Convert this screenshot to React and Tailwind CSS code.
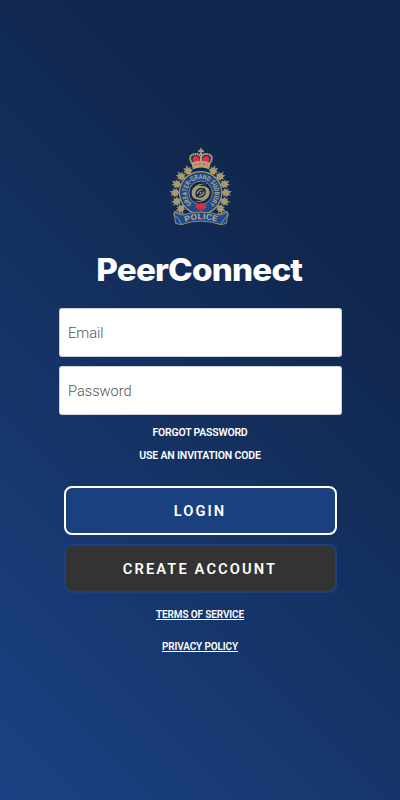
const LEAF =
  'M0 -14 L3 -8 L7 -11 L6 -4 L14 -7 L12 -1 L15 2 L7 6 L9 10 L1 8 L2 15 L-2 15 L-1 8 L-9 10 L-7 6 L-15 2 L-12 -1 L-14 -7 L-6 -4 L-7 -11 L-3 -8 Z'

// wreath leaves fan upwards and outwards from the stem
const SPRIG = 'M-2 12 L-9 5 L-14 4 L-9 -1 L-12 -8 L-6 -6 L-4 -18 L1 -9 L8 -15 L7 -5 L14 -4 L8 2 L10 7 L4 8 Z'

// angles measured from twelve o'clock, mirrored on both sides of the wreath
const WREATH = [30, 50, 70, 90, 110, 129]

function Crest() {
  return (
    <svg viewBox="0 0 216 264" className="w-[74px] h-[90px] ml-px" role="img" aria-label="Crest">
      <defs>
        <path id="motto" d="M82 181 A40.5 40.5 0 1 1 132 181" />
        <path id="scroll" d="M62 235 Q108 218 158 235" />
      </defs>

      {/* wreath */}
      <g fill="#a89a70">
        {WREATH.map((a) => (
          <g key={a}>
            <path d={SPRIG} transform={`translate(107 149) rotate(${a}) translate(0 -74)`} />
            <path d={SPRIG} transform={`translate(107 149) rotate(${-a}) translate(0 -74) scale(-1 1)`} />
          </g>
        ))}
      </g>
      <circle cx="107" cy="149" r="61.5" fill="none" stroke="#a89a70" strokeWidth="5" />

      {/* crown */}
      <path d="M82 68 Q74 43 91 37 Q102 35 108 43 Q114 35 126 37 Q141 43 134 68 Z" fill="#132b55" />
      <path d="M86 60 Q78 46 90 41 Q102 40 104 50 L104 61 Z M130 60 Q138 46 126 41 Q114 40 112 50 L112 61 Z" fill="#e52e45" />
      <path
        d="M82 63 Q68 40 88 36 Q103 33 108 45 Q113 33 128 36 Q148 40 134 63"
        fill="none"
        stroke="#b1a477"
        strokeWidth="6"
        strokeDasharray="5 1"
      />
      <path d="M105 42 H111 V65 H105 Z" fill="#b1a477" />
      <path d="M105 18 H111 L110 24 L116 23 V30 L110 29 L112 38 H104 L106 29 L100 30 V23 L106 24 Z" fill="#b1a477" />
      <path d="M80 61 Q108 49 136 61 L132 80 Q108 70 84 80 Z" fill="#b1a477" />
      <path d="M89 68 Q108 60 127 68" fill="none" stroke="#e52e45" strokeWidth="3" strokeDasharray="7 5" />

      {/* ring */}
      <circle cx="107" cy="149" r="59" fill="#1d4a91" stroke="#132b55" strokeWidth="1.5" />
      <circle cx="107" cy="149" r="34.5" fill="#10264b" stroke="#a89a70" strokeWidth="2.5" />
      <text fill="#b9b08c" fontFamily="Roboto, sans-serif" fontWeight="600" fontSize="20">
        <textPath href="#motto" textLength="200" lengthAdjust="spacingAndGlyphs">
          GREATER•GRAND SUDBURY
        </textPath>
      </text>

      {/* swirl */}
      <g transform="rotate(-12 107 149)">
        <path
          d="M132 130 C116 118 86 122 81 144 C78 158 88 167 101 167 C90 161 88 149 95 141 C103 132 116 134 120 140 C123 132 112 127 103 128 C113 125 124 126 132 130 Z"
          fill="#a89a70"
        />
        <path
          d="M82 168 C98 180 128 176 133 154 C136 140 126 131 113 131 C124 137 126 149 119 157 C111 166 98 164 94 158 C91 166 102 171 111 170 C101 173 90 172 82 168 Z"
          fill="#a89a70"
        />
        <path d="M96 151 C99 143 107 139 114 142 M118 147 C115 155 107 159 100 156" fill="none" stroke="#a89a70" strokeWidth="4" />
        <circle cx="107" cy="149" r="3" fill="#a89a70" />
      </g>

      {/* maple leaf */}
      <path d={LEAF} fill="#e8283f" transform="translate(108 190) scale(1.2 0.95)" />

      {/* banner */}
      <g fill="#1d4a91" stroke="#a89a70" strokeWidth="2.5" strokeLinejoin="round">
        <path d="M60 212 L31 204 Q24 214 31 222 L34 239 Q47 244 57 240 Z" />
        <path d="M156 212 L185 204 Q192 214 185 222 L182 239 Q169 244 159 240 Z" />
        <path d="M31 205 Q40 213 53 214 Q108 197 163 214 Q176 213 185 205 Q189 214 180 221 L165 242 Q108 222 51 242 L40 222 Q27 218 31 205 Z" />
      </g>
      <text fill="#b9b08c" fontFamily="Roboto, sans-serif" fontWeight="600" fontSize="23">
        <textPath href="#scroll" textLength="94" lengthAdjust="spacingAndGlyphs">
          POLICE
        </textPath>
      </text>
    </svg>
  )
}

function Field({ type, placeholder }) {
  return (
    <input
      type={type}
      placeholder={placeholder}
      className="w-[283px] h-[49px] rounded-[3px] bg-white border border-[#0a1263]/20 pt-px px-2 text-[14.6px] font-light text-gray-800 placeholder:text-[#555]"
    />
  )
}

function App() {
  return (
    <main className="h-[800px] w-full overflow-hidden bg-[linear-gradient(45deg,#1b4284_0%,#10274d_73%)] pl-px pt-[142px] flex flex-col items-center text-white font-['Roboto',sans-serif]">
      <Crest />
      <h1 className="mt-[17px] mr-0.5 h-10 scale-x-[1.07] font-['Inter',sans-serif] text-[31px] leading-[41px] font-extrabold tracking-[-0.75px]">
        PeerConnect
      </h1>

      <form className="mt-[19px] flex flex-col items-center">
        <div className="flex flex-col gap-[9px]">
          <Field type="email" placeholder="Email" />
          <Field type="password" placeholder="Password" />
        </div>
        <a href="#" className="mt-[10px] mr-px text-[10.5px] leading-4 font-semibold tracking-[-0.22px]">
          FORGOT PASSWORD
        </a>
        <a href="#" className="mt-[7px] mr-px text-[10.5px] leading-4 font-semibold tracking-[-0.15px]">
          USE AN INVITATION CODE
        </a>
        <button
          type="button"
          className="mt-[22px] w-[273px] h-[49px] rounded-lg border-2 border-white bg-[#1b4080] pt-0.5 pr-px text-[14.7px] font-semibold tracking-[2.1px]"
        >
          LOGIN
        </button>
        <button
          type="button"
          className="mt-[9px] w-[273px] h-[49px] rounded-lg border-2 border-[#1b4080] bg-[#333] pt-0.5 pr-px text-[14.7px] font-semibold tracking-[2.1px]"
        >
          CREATE ACCOUNT
        </button>
      </form>

      <a href="#" className="mt-[14px] mr-px text-[10px] leading-4 font-semibold tracking-[-0.12px] underline">
        TERMS OF SERVICE
      </a>
      <a href="#" className="mt-4 mr-px text-[10px] leading-4 font-semibold tracking-[-0.12px] underline">
        PRIVACY POLICY
      </a>
    </main>
  )
}

export default App
